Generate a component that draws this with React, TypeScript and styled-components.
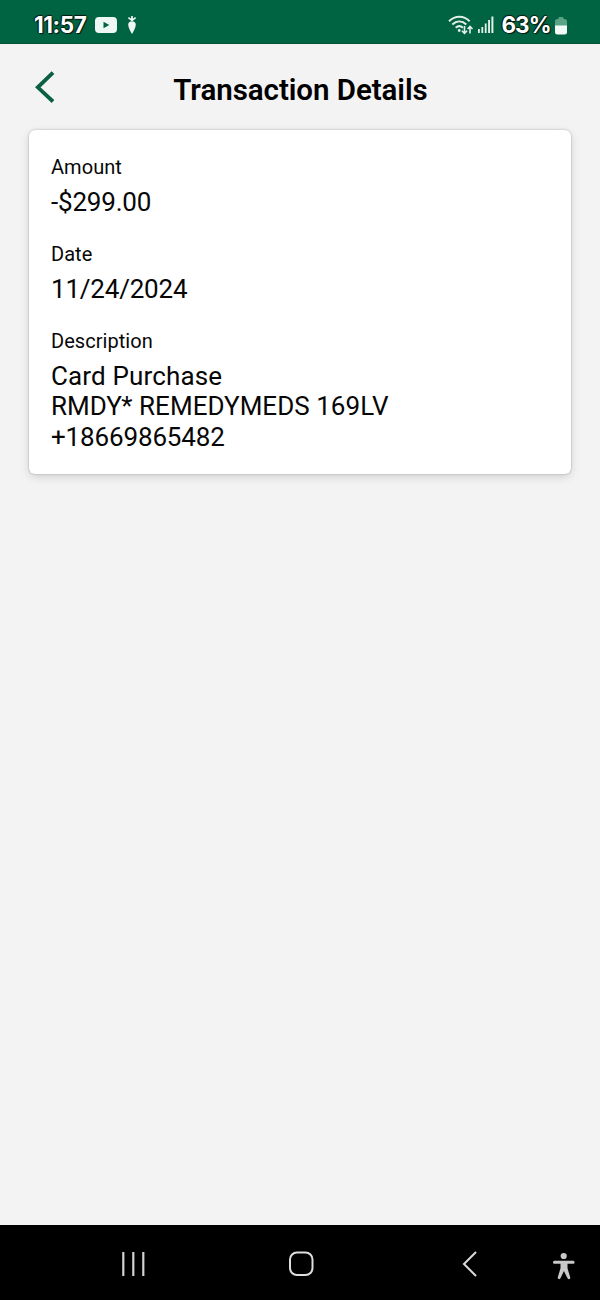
import React from "react";
import styled, { createGlobalStyle } from "styled-components";

const GlobalStyle = createGlobalStyle`
  * { box-sizing: border-box; }
  body { margin: 0; background: #f3f3f3; }
`;

const Screen = styled.div`
  display: flex;
  flex-direction: column;
  width: 600px;
  height: 1300px;
  background: #f3f3f3;
  color: #070707;
  font-family: Roboto, sans-serif;
`;

const StatusBar = styled.header`
  display: flex;
  align-items: center;
  justify-content: space-between;
  height: 44px;
  padding: 7px 33px 0 34px;
  background: #006442;
  border-bottom: 1px solid #005235;
`;

const StatusGroup = styled.div`
  display: flex;
  align-items: center;
`;

const StatusText = styled.span<{ $size: number; $spacing: number; $left?: number }>`
  margin-left: ${(p) => p.$left ?? 0}px;
  font-family: Inter, sans-serif;
  font-size: ${(p) => p.$size}px;
  font-weight: 700;
  line-height: 28px;
  letter-spacing: ${(p) => p.$spacing}px;
  color: #fff;
  text-shadow: 1px 1px 1px #00170c, -1px 0 1px #00170c, 0 -1px 1px #00170c;
`;

const Icon = styled.svg<{ $left?: number; $top?: number }>`
  display: block;
  flex: none;
  margin-left: ${(p) => p.$left ?? 0}px;
  margin-top: ${(p) => p.$top ?? 0}px;
  overflow: visible;
`;

const TitleBar = styled.div`
  display: grid;
  grid-template-columns: 60px 1fr 60px;
  align-items: center;
  height: 86px;
  flex: none;
`;

const BackButton = styled.button`
  display: flex;
  align-items: center;
  height: 40px;
  padding: 0 0 0 35px;
  border: 0;
  background: none;
`;

const Title = styled.h1`
  margin: 0;
  padding: 6px 0 0 1px;
  text-align: center;
  font-size: 29.5px;
  font-weight: 600;
  line-height: 36px;
  letter-spacing: -0.05px;
  color: #000;
`;

const Card = styled.main`
  display: flex;
  flex-direction: column;
  gap: 24.5px;
  height: 344px;
  margin: 0 29px;
  padding: 24.5px 22px 0;
  border-radius: 6px;
  background: #fff;
  box-shadow: 0 0 2px rgba(0, 0, 0, 0.3), 0 3px 10px rgba(0, 0, 0, 0.14);
`;

const Field = styled.section`
  display: flex;
  flex-direction: column;
  gap: 8px;
`;

const Label = styled.div`
  font-size: 20px;
  line-height: 24px;
  letter-spacing: 0.05px;
`;

const Value = styled.div`
  font-size: 26px;
  line-height: 30.5px;
`;

const Line = styled.div<{ $spacing: number }>`
  letter-spacing: ${(p) => p.$spacing}px;
  white-space: nowrap;
`;

const NavBar = styled.nav`
  display: flex;
  align-items: center;
  height: 75px;
  margin-top: auto;
  padding: 3px 0 0 121px;
  background: #000;
`;

const fields = [
  { label: "Amount", lines: [{ text: "-$299.00", spacing: -0.2 }] },
  { label: "Date", lines: [{ text: "11/24/2024", spacing: -0.2 }] },
  {
    label: "Description",
    lines: [
      { text: "Card Purchase", spacing: 0.15 },
      { text: "RMDY* REMEDYMEDS 169LV", spacing: 0.03 },
      { text: "+18669865482", spacing: -0.15 },
    ],
  },
];

export default function App() {
  return (
    <Screen>
      <GlobalStyle />
      <StatusBar>
        <StatusGroup>
          <StatusText $size={22.5} $spacing={-0.4}>11:57</StatusText>
          <Icon $left={9} width="22" height="16" viewBox="0 0 22 16">
            <rect width="22" height="16" rx="4" fill="#eef7f3" />
            <path d="M8.5 4.8v6.4l5.8-3.2z" fill="#006442" />
          </Icon>
          <Icon $left={10} width="10" height="20" viewBox="0 0 10 20">
            <path d="M5 6V1M4.7 5.2 1.4 2.6M5.3 5.2l3.3-2.6" stroke="#eef7f3" strokeWidth="1.7" fill="none" />
            <path d="M5 6.2c2.3 0 3.8 1.3 3.8 3.2 0 2.8-2.1 6.5-3.8 9.6-1.7-3.1-3.8-6.8-3.8-9.6 0-1.9 1.5-3.2 3.8-3.2z" fill="#eef7f3" />
          </Icon>
        </StatusGroup>
        <StatusGroup>
          <Icon width="26" height="20" viewBox="0 0 26 20" fill="none" stroke="#e3f0ea" strokeWidth="2">
            <path d="M1 6.2C7.2.2 15.6.2 21.6 6.2M4.3 9.5c4.3-4.1 9.8-4.1 14 0M7.7 12.8c2.2-2.1 5-2.1 7.2 0" />
            <circle cx="11.2" cy="15.5" r="1.4" fill="#e3f0ea" stroke="none" />
            <path d="M16.5 11v7M13.9 15.7l2.6 2.6 2.6-2.6M22 18.5v-7M19.6 14l2.4-2.5 2.5 2.5" strokeWidth="1.6" />
          </Icon>
          <Icon $left={4} $top={-1} width="16" height="17" viewBox="0 0 16 17" fill="#e3f0ea">
            <rect x="0" y="13" width="1.8" height="4" />
            <rect x="3.4" y="11" width="1.8" height="6" />
            <rect x="6.8" y="7.5" width="1.8" height="9.5" />
            <rect x="10.1" y="4" width="1.9" height="13" />
            <rect x="13.4" y="0.5" width="2" height="16.5" />
          </Icon>
          <StatusText $size={22.5} $spacing={-1} $left={8}>63%</StatusText>
          <Icon $left={4.5} $top={1} width="12" height="18" viewBox="0 0 12 18">
            <path d="M3.5 2V1q0-1 1-1h3q1 0 1 1v1h1q2.5 0 2.5 2.5V9H0V4.5Q0 2 2.5 2z" fill="#5aa386" />
            <path d="M0 8.5h12v6.5q0 2.5-2.5 2.5h-7Q0 17.5 0 15z" fill="#f4faf7" />
          </Icon>
        </StatusGroup>
      </StatusBar>
      <TitleBar>
        <BackButton aria-label="Back">
          <Icon width="20" height="32" viewBox="0 0 20 32">
            <path d="M18 1.7 2.8 16.3 18 30.5" fill="none" stroke="#0a6041" strokeWidth="3.8" />
          </Icon>
        </BackButton>
        <Title>Transaction Details</Title>
      </TitleBar>
      <Card>
        {fields.map((field) => (
          <Field key={field.label}>
            <Label>{field.label}</Label>
            <Value>
              {field.lines.map((line) => (
                <Line key={line.text} $spacing={line.spacing}>{line.text}</Line>
              ))}
            </Value>
          </Field>
        ))}
      </Card>
      <NavBar>
        <Icon width="25" height="26" viewBox="0 0 25 26" stroke="#d2d2d2" strokeWidth="2.2">
          <path d="M2.3 1v24M12.3 1v24M22.3 1v24" />
        </Icon>
        <Icon $left={142} width="26" height="26" viewBox="0 0 26 26">
          <rect x="2" y="1.5" width="22.5" height="22.5" rx="7" fill="none" stroke="#dedede" strokeWidth="2" />
        </Icon>
        <Icon $left={148} width="15" height="26" viewBox="0 0 15 26">
          <path d="M14 1 2 13l12 12" fill="none" stroke="#dadada" strokeWidth="2" />
        </Icon>
        <Icon $left={76} $top={3} width="22" height="28" viewBox="0 0 22 28" fill="#c9c9c9">
          <circle cx="10.7" cy="4" r="3.1" />
          <path d="M1.3 8.7h19q1.3 0 1.3 1.5t-1.3 1.5H14.5v4.5l2.7 9q.4 1.6-1.1 2-1.2.2-1.700-1.1L10.9 19l-3.3 7.1q-.6 1.3-1.8 1-1.4-.4-1-1.9l2.7-9v-4.5H1.3Q0 11.7 0 10.2t1.3-1.5z" />
        </Icon>
      </NavBar>
    </Screen>
  );
}
